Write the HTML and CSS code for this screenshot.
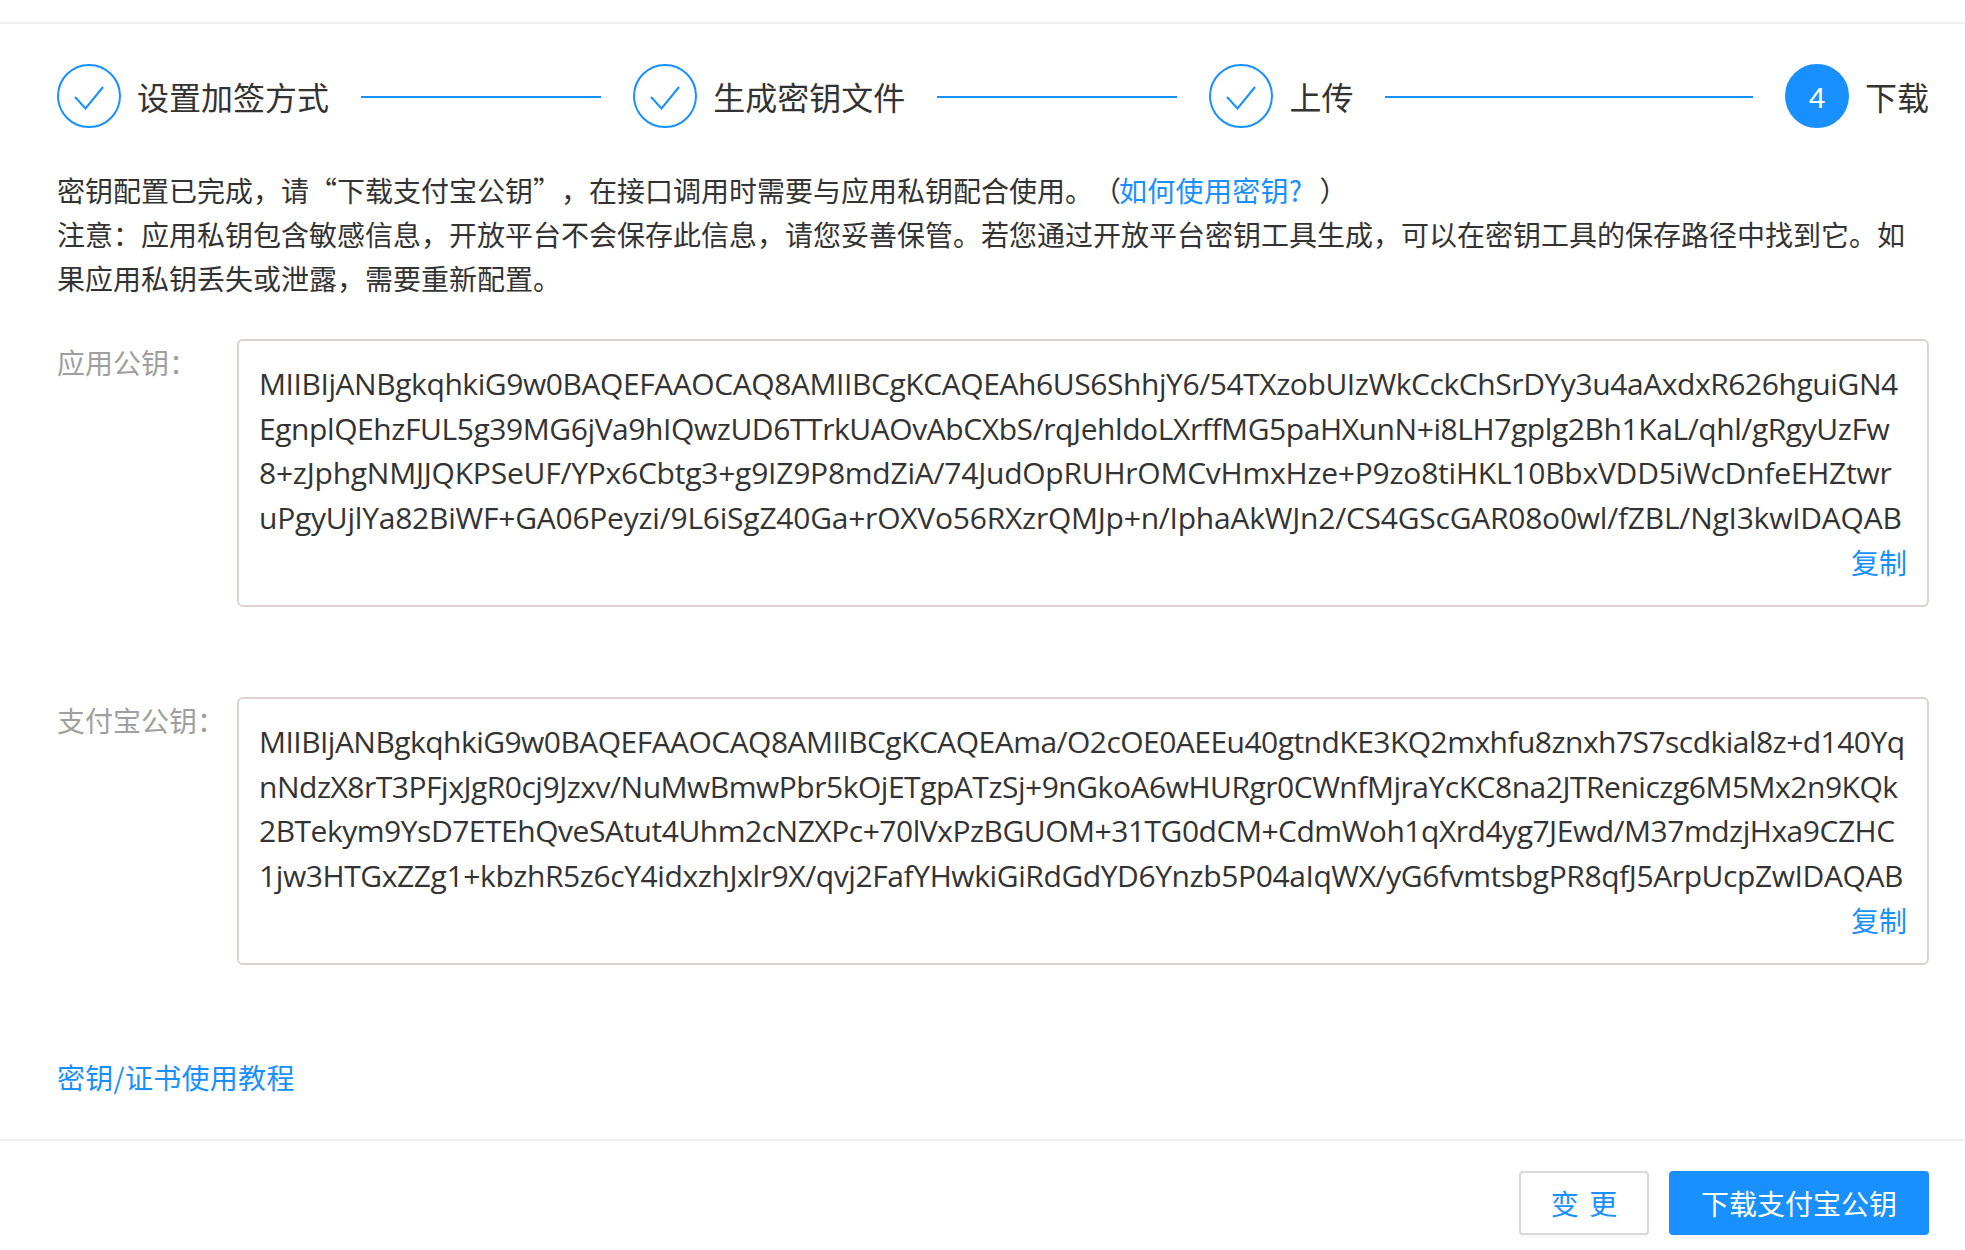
FILE: index.html
```html
<!DOCTYPE html>
<html lang="zh-CN">
<head>
<meta charset="utf-8">
<title>下载支付宝公钥</title>
<link rel="stylesheet" href="styles.css">
</head>
<body>
<div class="page">
  <main class="content">
    <ol class="steps">
      <li class="step"><span class="dot"><svg class="check" viewBox="0 0 30 24"><path d="M1 11 L11.5 22.5 L29 1"/></svg></span><span class="step-title">设置加签方式</span></li>
      <li class="bar"></li>
      <li class="step"><span class="dot"><svg class="check" viewBox="0 0 30 24"><path d="M1 11 L11.5 22.5 L29 1"/></svg></span><span class="step-title">生成密钥文件</span></li>
      <li class="bar"></li>
      <li class="step"><span class="dot"><svg class="check" viewBox="0 0 30 24"><path d="M1 11 L11.5 22.5 L29 1"/></svg></span><span class="step-title">上传</span></li>
      <li class="bar bar-long"></li>
      <li class="step"><span class="dot dot-active">4</span><span class="step-title">下载</span></li>
    </ol>
    <div class="notice">
      <p>密钥配置已完成，请“下载支付宝公钥”，在接口调用时需要与应用私钥配合使用。（<a class="help-link" href="#">如何使用密钥?</a>）</p>
      <p>注意：应用私钥包含敏感信息，开放平台不会保存此信息，请您妥善保管。若您通过开放平台密钥工具生成，可以在密钥工具的保存路径中找到它。如<br>果应用私钥丢失或泄露，需要重新配置。</p>
    </div>
    <div class="field">
      <label class="field-label">应用公钥：</label>
      <div class="key-box">
        <div class="key-text">
          <div class="fit-a">MIIBIjANBgkqhkiG9w0BAQEFAAOCAQ8AMIIBCgKCAQEAh6US6ShhjY6/54TXzobUIzWkCckChSrDYy3u4aAxdxR626hguiGN4</div>
          <div class="fit-a">EgnplQEhzFUL5g39MG6jVa9hIQwzUD6TTrkUAOvAbCXbS/rqJehldoLXrffMG5paHXunN+i8LH7gplg2Bh1KaL/qhl/gRgyUzFw</div>
          <div class="fit-b">8+zJphgNMJJQKPSeUF/YPx6Cbtg3+g9IZ9P8mdZiA/74JudOpRUHrOMCvHmxHze+P9zo8tiHKL10BbxVDD5iWcDnfeEHZtwr</div>
          <div class="fit-b">uPgyUjlYa82BiWF+GA06Peyzi/9L6iSgZ40Ga+rOXVo56RXzrQMJp+n/IphaAkWJn2/CS4GScGAR08o0wl/fZBL/NgI3kwIDAQAB</div>
        </div>
        <div class="copy-row"><a href="#">复制</a></div>
      </div>
    </div>
    <div class="field">
      <label class="field-label">支付宝公钥：</label>
      <div class="key-box">
        <div class="key-text">
          <div class="fit-e">MIIBIjANBgkqhkiG9w0BAQEFAAOCAQ8AMIIBCgKCAQEAma/O2cOE0AEEu40gtndKE3KQ2mxhfu8znxh7S7scdkial8z+d140Yq</div>
          <div class="fit-c">nNdzX8rT3PFjxJgR0cj9Jzxv/NuMwBmwPbr5kOjETgpATzSj+9nGkoA6wHURgr0CWnfMjraYcKC8na2JTReniczg6M5Mx2n9KQk</div>
          <div class="fit-c">2BTekym9YsD7ETEhQveSAtut4Uhm2cNZXPc+70lVxPzBGUOM+31TG0dCM+CdmWoh1qXrd4yg7JEwd/M37mdzjHxa9CZHC</div>
          <div class="fit-d">1jw3HTGxZZg1+kbzhR5z6cY4idxzhJxlr9X/qvj2FafYHwkiGiRdGdYD6Ynzb5P04aIqWX/yG6fvmtsbgPR8qfJ5ArpUcpZwIDAQAB</div>
        </div>
        <div class="copy-row"><a href="#">复制</a></div>
      </div>
    </div>
    <p class="tutorial"><a href="#">密钥/证书使用教程</a></p>
  </main>
  <footer class="actions">
    <button class="btn btn-ghost" type="button">变 更</button>
    <button class="btn btn-primary" type="button">下载支付宝公钥</button>
  </footer>
</div>
</body>
</html>
```
FILE: styles.css
```css
* { box-sizing: border-box; }
html, body { margin: 0; background: #fff; }
body {
  font-family: "Noto Sans CJK SC", "Open Sans", sans-serif;
  font-size: 28px;
  line-height: 44.5px;
  color: #333;
  height: 1250px;
  overflow: hidden;
  text-spacing-trim: space-all;
}
a { color: #1890ff; text-decoration: none; }
p { margin: 0; }
.page { padding-top: 22px; }
.content {
  border-top: 2px solid #f0f0f0;
  border-bottom: 2px solid #f0f0f0;
  height: 1119px;
  padding: 40px 36px 0 57px;
}
.steps {
  display: flex;
  align-items: center;
  list-style: none;
  margin: 0;
  padding: 0;
  height: 64px;
}
.step { display: flex; align-items: center; flex: none; }
.dot {
  width: 64px;
  height: 64px;
  border: 2px solid #1890ff;
  border-radius: 50%;
  display: flex;
  align-items: center;
  justify-content: center;
  margin-right: 16px;
  padding-top: 3px;
  color: #fff;
  font-size: 30px;
  font-family: "Liberation Sans", sans-serif;
}
.dot-active { background: #1890ff; padding-top: 5px; }
.check { width: 30px; height: 24px; fill: none; stroke: #1890ff; stroke-width: 2; }
.step-title { font-size: 32px; line-height: 64px; color: #333; }
.bar { flex: 1 1 0; height: 2px; background: #1890ff; margin: 2px 32px 0; }
.bar-long { flex: 1.53 1 0; }
.notice { margin-top: 40px; line-height: 44px; }
.help-link { margin: 0 17px 0 -2px; letter-spacing: 0.3px; }
.field { display: flex; margin-top: 39px; }
.field + .field { margin-top: 90px; }
.field-label { flex: none; width: 180px; color: #9f9f9f; padding-top: 1px; }
.key-box {
  flex: 1;
  min-width: 0;
  height: 268px;
  border: 2px solid #dcd3d0;
  border-radius: 6px;
  padding: 21px 20px 0;
}
.key-text { white-space: nowrap; font-family: "Open Sans", sans-serif; font-size: 30px; }
.fit-a { letter-spacing: -0.42px; }
.fit-b { letter-spacing: -0.23px; }
.fit-c { letter-spacing: -0.48px; }
.fit-d { letter-spacing: -0.4px; }
.fit-e { letter-spacing: -0.53px; }
.copy-row { text-align: right; }
.tutorial { margin-top: 90px; letter-spacing: 0.3px; }
.actions {
  display: flex;
  justify-content: flex-end;
  gap: 20px;
  padding: 30px 36px 0 0;
}
.btn {
  height: 64px;
  font: inherit;
  line-height: 1;
  border-radius: 4px;
  padding: 0;
  box-shadow: 0 3px 0 rgba(0,0,0,0.03);
}
.btn-ghost { width: 130px; background: #fff; border: 2px solid #d9d9d9; color: #1890ff; word-spacing: 4px; }
.btn-primary { width: 260px; background: #1890ff; border: 0; color: #fff; }
```
